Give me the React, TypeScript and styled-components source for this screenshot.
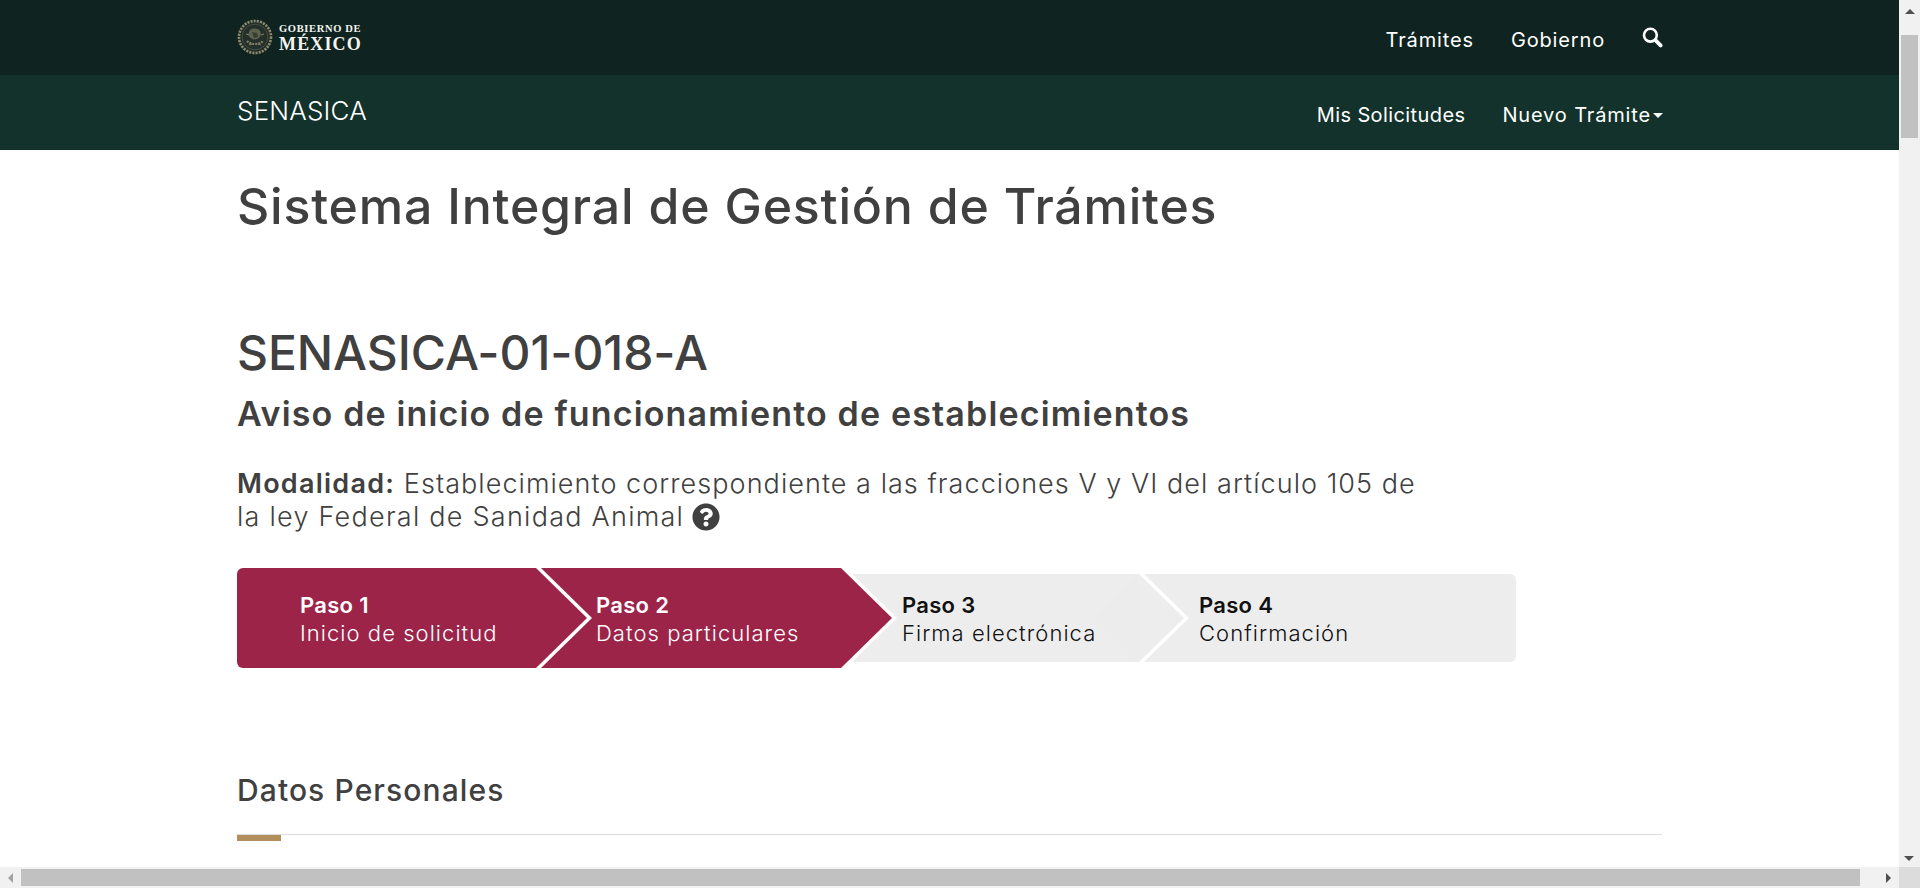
import styled, { createGlobalStyle } from 'styled-components';
import { FaQuestionCircle } from 'react-icons/fa';

const GlobalStyle = createGlobalStyle`
  html, body {
    margin: 0;
    height: 100%;
    overflow: hidden;
    background: #fff;
    font-family: Inter, "Open Sans", sans-serif;
    color: #404041;
  }
`;

const Screen = styled.div`
  display: grid;
  grid-template-columns: 1fr 21px;
  grid-template-rows: 1fr 21px;
  width: 1920px;
  height: 888px;
  overflow: hidden;
`;

const Page = styled.main`
  overflow: hidden;
  min-width: 0;
`;

const MainNav = styled.header`
  display: flex;
  align-items: center;
  justify-content: space-between;
  height: 75px;
  padding: 0 236px 0 237px;
  background: #0f2420;
`;

const SubNav = styled(MainNav)`
  background: #13322b;
`;

const Brand = styled.div`
  display: flex;
  align-items: center;
  gap: 6px;
  margin-top: -1px;
`;

const BrandText = styled.div`
  display: flex;
  flex-direction: column;
  margin-top: 2px;
  font-family: "Liberation Serif", serif;
  font-weight: 700;
  color: #f4f4f0;
`;

const BrandTop = styled.span`
  font-size: 10.5px;
  line-height: 11px;
  letter-spacing: 0.65px;
  white-space: nowrap;
`;

const BrandBottom = styled.span`
  margin-top: 2px;
  font-size: 18px;
  line-height: 17px;
  letter-spacing: 1.15px;
  white-space: nowrap;
`;

const SiteName = styled.div`
  font-size: 26px;
  font-weight: 300;
  letter-spacing: 0.2px;
  color: #fff;
  margin-top: -5px;
`;

const NavLinks = styled.nav`
  display: flex;
  align-items: center;
  gap: 37px;
  color: #fff;
  font-size: 20px;
  font-weight: 400;
  white-space: nowrap;
`;

const NavLink = styled.a<{ $tracking: number }>`
  display: flex;
  align-items: center;
  gap: 2px;
  margin-top: 4px;
  letter-spacing: ${({ $tracking }) => $tracking}px;
`;

const Caret = styled.span`
  width: 0;
  height: 0;
  border-left: 5px solid transparent;
  border-right: 5px solid transparent;
  border-top: 5px solid #fff;
  margin-top: 2px;
`;

const Content = styled.div`
  padding: 0 237px;
`;

const Title = styled.h1`
  margin: 27px 0 0;
  font-size: 50px;
  line-height: 58px;
  font-weight: 500;
  letter-spacing: 0.8px;
  white-space: nowrap;
`;

const Code = styled.h2`
  margin: 89px 0 0;
  font-size: 48px;
  line-height: 58px;
  font-weight: 500;
  letter-spacing: -0.05px;
  white-space: nowrap;
`;

const Subtitle = styled.h3`
  margin: 12px 0 0;
  font-size: 34px;
  line-height: 40px;
  font-weight: 600;
  letter-spacing: 1.15px;
  white-space: nowrap;
`;

const Modalidad = styled.p`
  margin: 33px 0 0;
  font-size: 27px;
  line-height: 33px;
  font-weight: 300;
  letter-spacing: 1.05px;
  white-space: nowrap;

  strong {
    font-weight: 600;
    letter-spacing: 1.25px;
  }
`;

const SecondLine = styled.span`
  letter-spacing: 1.25px;
`;

const HelpIcon = styled(FaQuestionCircle)`
  width: 28px;
  height: 28px;
  margin-left: 8px;
  vertical-align: -5px;
  color: #404041;
`;

const Stepper = styled.ol`
  display: flex;
  align-items: center;
  height: 100px;
  width: 1279px;
  margin: 35px 0 0;
  padding: 0;
  list-style: none;
`;

const Step = styled.li<{ $active?: boolean; $width: number; $order: number; $inset: number }>`
  position: relative;
  z-index: ${({ $order }) => $order};
  flex: ${({ $width }) => ($width ? `0 0 ${$width}px` : '1')};
  display: flex;
  flex-direction: column;
  justify-content: center;
  box-sizing: border-box;
  height: ${({ $active }) => ($active ? 100 : 88)}px;
  padding: 1px 0 0 ${({ $inset }) => $inset}px;
  background: ${({ $active }) => ($active ? '#9d2449' : '#ededed')};
  color: ${({ $active }) => ($active ? '#fff' : '#111')};

  &:first-child {
    border-radius: 6px 0 0 6px;
  }

  &:last-child {
    border-radius: 0 6px 6px 0;
  }
`;

const Arrow = styled.span<{ $active?: boolean }>`
  position: absolute;
  top: 0;
  bottom: 0;
  left: 100%;
  width: ${({ $active }) => ($active ? 51 : 45)}px;
  background: ${({ $active }) => ($active ? '#9d2449' : '#ededed')};
  clip-path: polygon(0 0, 100% 50%, 0 100%);
`;

const ArrowHalo = styled.span<{ $active?: boolean }>`
  position: absolute;
  top: 0;
  bottom: 0;
  left: 100%;
  width: ${({ $active }) => ($active ? 56 : 50)}px;
  background: #fff;
  clip-path: polygon(0 0, 5px 0, 100% 50%, 5px 100%, 0 100%);
`;

const GhostNotch = styled.span`
  position: absolute;
  top: 0;
  bottom: 0;
  right: 0;
  width: 44px;
  background: #ececec;
  clip-path: polygon(100% 0, 0 50%, 100% 100%);
`;

const StepNumber = styled.strong`
  position: relative;
  font-size: 22px;
  line-height: 28px;
  font-weight: 600;
  letter-spacing: 0.3px;
`;

const StepName = styled.span`
  position: relative;
  font-size: 22px;
  line-height: 28px;
  font-weight: 300;
  letter-spacing: 1.05px;
  white-space: nowrap;
`;

const SectionTitle = styled.h4`
  margin: 104px 0 0;
  font-size: 30px;
  line-height: 36px;
  font-weight: 500;
  letter-spacing: 1.1px;
`;

const Rule = styled.div`
  height: 1px;
  margin-top: 26px;
  background: #dddddd;
`;

const RuleAccent = styled.div`
  width: 44px;
  height: 6px;
  background: #b38e5d;
`;

const VerticalBar = styled.div`
  display: flex;
  flex-direction: column;
  align-items: center;
  background: #f1f1f1;
  padding-top: 9px;
`;

const HorizontalBar = styled.div`
  display: flex;
  align-items: center;
  background: #f1f1f1;
  padding: 0 8px;
`;

const VerticalThumb = styled.div`
  width: 17px;
  height: 103px;
  margin-top: 21px;
  background: #c1c1c1;
`;

const HorizontalThumb = styled.div`
  width: 1839px;
  height: 17px;
  margin-left: 8px;
  background: #c1c1c1;
`;

const BarCorner = styled.div`
  background: #dcdcdc;
`;

const ArrowUp = styled.span`
  border-left: 5px solid transparent;
  border-right: 5px solid transparent;
  border-bottom: 5px solid #505050;
`;

const ArrowDown = styled.span`
  position: absolute;
  bottom: 27px;
  right: 6px;
  border-left: 5px solid transparent;
  border-right: 5px solid transparent;
  border-top: 5px solid #505050;
`;

const ArrowLeft = styled.span`
  border-top: 5px solid transparent;
  border-bottom: 5px solid transparent;
  border-right: 5px solid #a3a3a3;
`;

const ArrowRight = styled.span`
  margin-left: 26px;
  border-top: 5px solid transparent;
  border-bottom: 5px solid transparent;
  border-left: 5px solid #505050;
`;

const SearchGlyph = () => (
  <svg width="21" height="21" viewBox="0 0 21 21" fill="none" stroke="#fff">
    <circle cx="8.4" cy="8.2" r="6.4" strokeWidth="2.6" />
    <path d="M13.6 13.4l5 5" strokeWidth="3.8" strokeLinecap="round" />
  </svg>
);

const Seal = () => (
  <svg width="36" height="36" viewBox="0 0 36 36" fill="none">
    <circle cx="18" cy="18" r="17.5" fill="#232f28" />
    <circle cx="18" cy="18" r="16" stroke="#8d8a70" strokeWidth="2.6" strokeDasharray="2 1.2" />
    <circle cx="18" cy="18" r="12.8" stroke="#4d5546" strokeWidth="0.8" />
    <path d="M10 22c3 4 13 4 16 0" stroke="#7f7d65" strokeWidth="2.2" strokeDasharray="2 1" />
    <path d="M13 11c3-2 8-2 10 1 2 3 0 7-3 8-3 1-7 0-8-3-1-2 0-4 1-6z" fill="#5d6150" />
    <path d="M15 13l5 1 1 4-4 1z" fill="#34402f" />
    <path d="M9 15l3 1M24 16l3-1M12 26l3-1M21 25l3 1" stroke="#7f7d65" strokeWidth="1.2" />
  </svg>
);

const App = () => {
  return (
    <>
      <GlobalStyle />
      <Screen>
        <Page>
          <MainNav>
            <Brand>
              <Seal />
              <BrandText>
                <BrandTop>GOBIERNO DE</BrandTop>
                <BrandBottom>MÉXICO</BrandBottom>
              </BrandText>
            </Brand>
            <NavLinks>
              <NavLink $tracking={0.85}>Trámites</NavLink>
              <NavLink $tracking={0.85}>Gobierno</NavLink>
              <SearchGlyph />
            </NavLinks>
          </MainNav>
          <SubNav>
            <SiteName>SENASICA</SiteName>
            <NavLinks>
              <NavLink $tracking={0.4}>Mis Solicitudes</NavLink>
              <NavLink $tracking={0.85}>
                Nuevo Trámite
                <Caret />
              </NavLink>
            </NavLinks>
          </SubNav>
          <Content>
            <Title>Sistema Integral de Gestión de Trámites</Title>
            <Code>SENASICA-01-018-A</Code>
            <Subtitle>Aviso de inicio de funcionamiento de establecimientos</Subtitle>
            <Modalidad>
              <strong>Modalidad:</strong> Establecimiento correspondiente a las fracciones V y VI del artículo 105 de
              <br />
              <SecondLine>la ley Federal de Sanidad Animal</SecondLine>
              <HelpIcon />
            </Modalidad>
            <Stepper>
              <Step $active $width={299} $order={4} $inset={63}>
                <ArrowHalo $active />
                <Arrow $active />
                <StepNumber>Paso 1</StepNumber>
                <StepName>Inicio de solicitud</StepName>
              </Step>
              <Step $active $width={305} $order={3} $inset={60}>
                <ArrowHalo $active />
                <Arrow $active />
                <StepNumber>Paso 2</StepNumber>
                <StepName>Datos particulares</StepName>
              </Step>
              <Step $width={298} $order={2} $inset={61}>
                <GhostNotch />
                <ArrowHalo />
                <Arrow />
                <StepNumber>Paso 3</StepNumber>
                <StepName>Firma electrónica</StepName>
              </Step>
              <Step $width={0} $order={1} $inset={60}>
                <StepNumber>Paso 4</StepNumber>
                <StepName>Confirmación</StepName>
              </Step>
            </Stepper>
            <SectionTitle>Datos Personales</SectionTitle>
            <Rule />
            <RuleAccent />
          </Content>
        </Page>
        <VerticalBar>
          <ArrowUp />
          <VerticalThumb />
          <ArrowDown />
        </VerticalBar>
        <HorizontalBar>
          <ArrowLeft />
          <HorizontalThumb />
          <ArrowRight />
        </HorizontalBar>
        <BarCorner />
      </Screen>
    </>
  );
};

export default App;
